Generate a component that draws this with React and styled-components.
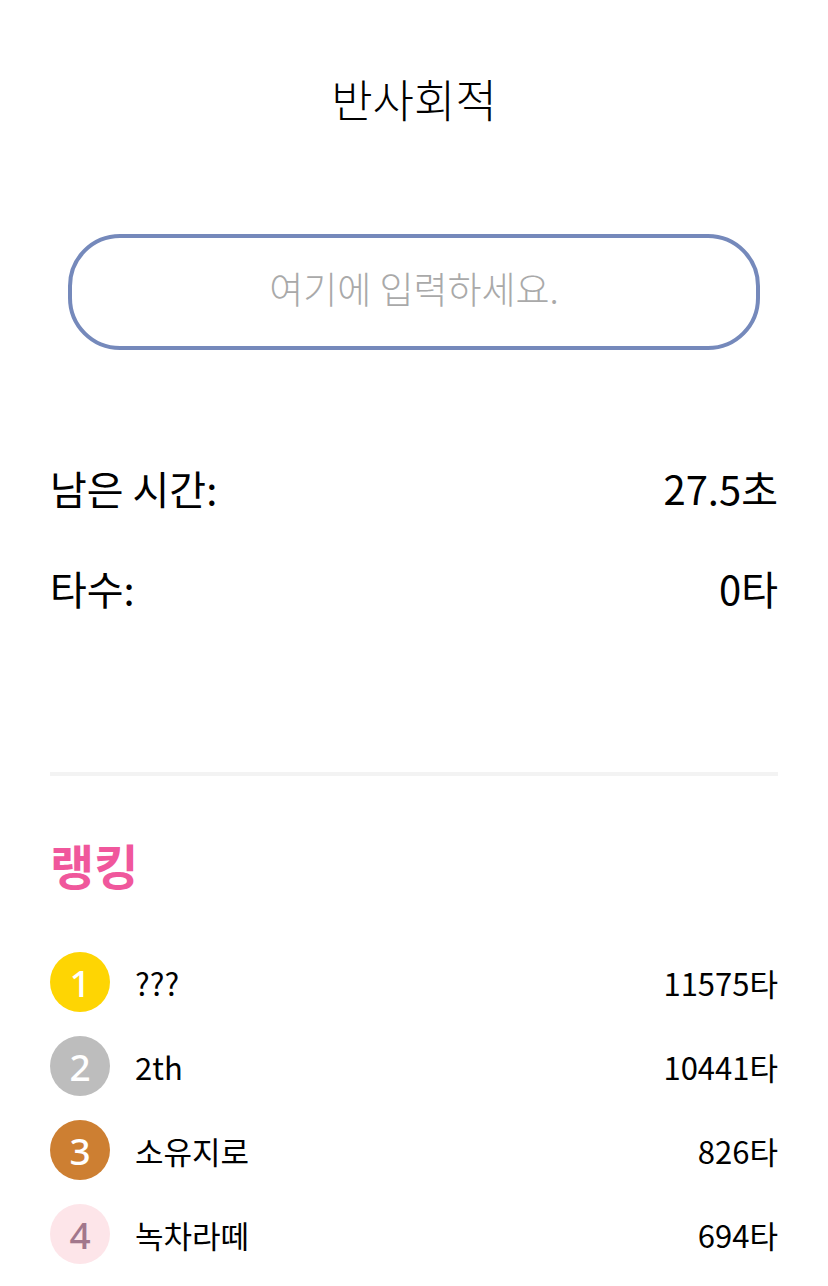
import React from "react";
import styled, { createGlobalStyle } from "styled-components";

const Global = createGlobalStyle`
  html, body { margin: 0; padding: 0; background: #fff; }
  body { font-family: "Noto Sans", "Noto Sans CJK KR", sans-serif; color: #000; }
  * { box-sizing: border-box; }
`;

const Page = styled.div`
  width: 828px;
  padding: 0 50px;
  display: flex;
  flex-direction: column;
`;

const Title = styled.h1`
  margin: 0;
  height: 196px;
  display: flex;
  align-items: center;
  justify-content: center;
  font-size: 45px;
  font-weight: 300;
  font-family: "Noto Sans CJK KR", sans-serif;
`;

const InputWrap = styled.div`
  padding: 38px 18px 0;
`;

const Input = styled.input`
  width: 100%;
  height: 116px;
  border: 4px solid #7589bb;
  border-radius: 52px;
  outline: none;
  text-align: center;
  font-family: "Noto Sans CJK KR", sans-serif;
  font-size: 37px;
  font-weight: 300;
  color: #333;
  background: #fff;
  padding: 0 0 8px;
  &::placeholder { color: #a9a9a9; }
`;

const Stats = styled.div`
  margin-top: 88px;
  display: flex;
  flex-direction: column;
`;

const StatRow = styled.div`
  height: 100px;
  display: flex;
  align-items: center;
  justify-content: space-between;
  font-size: 40px;
  font-family: "Noto Sans CJK KR", sans-serif;
`;

const Divider = styled.hr`
  margin: 134px 0 0;
  border: none;
  height: 4px;
  background: #f3f3f3;
`;

const SectionTitle = styled.h2`
  margin: 57px 0 0;
  height: 62px;
  display: flex;
  align-items: center;
  font-size: 48px;
  font-weight: 700;
  color: #f0579c;
  font-family: "Noto Sans CJK KR", sans-serif;
`;

const RankList = styled.ul`
  list-style: none;
  margin: 57px 0 0;
  padding: 0;
  display: flex;
  flex-direction: column;
  gap: 24px;
`;

const RankRow = styled.li`
  height: 60px;
  display: flex;
  align-items: center;
  font-size: 31px;
  font-family: "Noto Sans CJK KR", sans-serif;
`;

const Badge = styled.span`
  width: 60px;
  height: 60px;
  flex: none;
  border-radius: 50%;
  background: ${(p) => p.$bg};
  color: ${(p) => p.$fg};
  display: flex;
  align-items: center;
  justify-content: center;
  font-family: "Noto Sans", sans-serif;
  font-size: 37px;
  font-weight: 500;
  line-height: 1;
`;

const Name = styled.span`
  margin-left: 25px;
  flex: 1;
`;

const Score = styled.span``;

const ranks = [
  { n: 1, name: "???", score: "11575타", bg: "#fed503", fg: "#fff" },
  { n: 2, name: "2th", score: "10441타", bg: "#bdbdbd", fg: "#fff" },
  { n: 3, name: "소유지로", score: "826타", bg: "#cd7f32", fg: "#fff" },
  { n: 4, name: "녹차라떼", score: "694타", bg: "#fde5e9", fg: "#a2778c" },
];

export default function App() {
  return (
    <>
      <Global />
      <Page>
        <Title>반사회적</Title>
        <InputWrap>
          <Input placeholder="여기에 입력하세요." />
        </InputWrap>
        <Stats>
          <StatRow>
            <span>남은 시간:</span>
            <span>27.5초</span>
          </StatRow>
          <StatRow>
            <span>타수:</span>
            <span>0타</span>
          </StatRow>
        </Stats>
        <Divider />
        <SectionTitle>랭킹</SectionTitle>
        <RankList>
          {ranks.map((r) => (
            <RankRow key={r.n}>
              <Badge $bg={r.bg} $fg={r.fg}>{r.n}</Badge>
              <Name>{r.name}</Name>
              <Score>{r.score}</Score>
            </RankRow>
          ))}
        </RankList>
      </Page>
    </>
  );
}
